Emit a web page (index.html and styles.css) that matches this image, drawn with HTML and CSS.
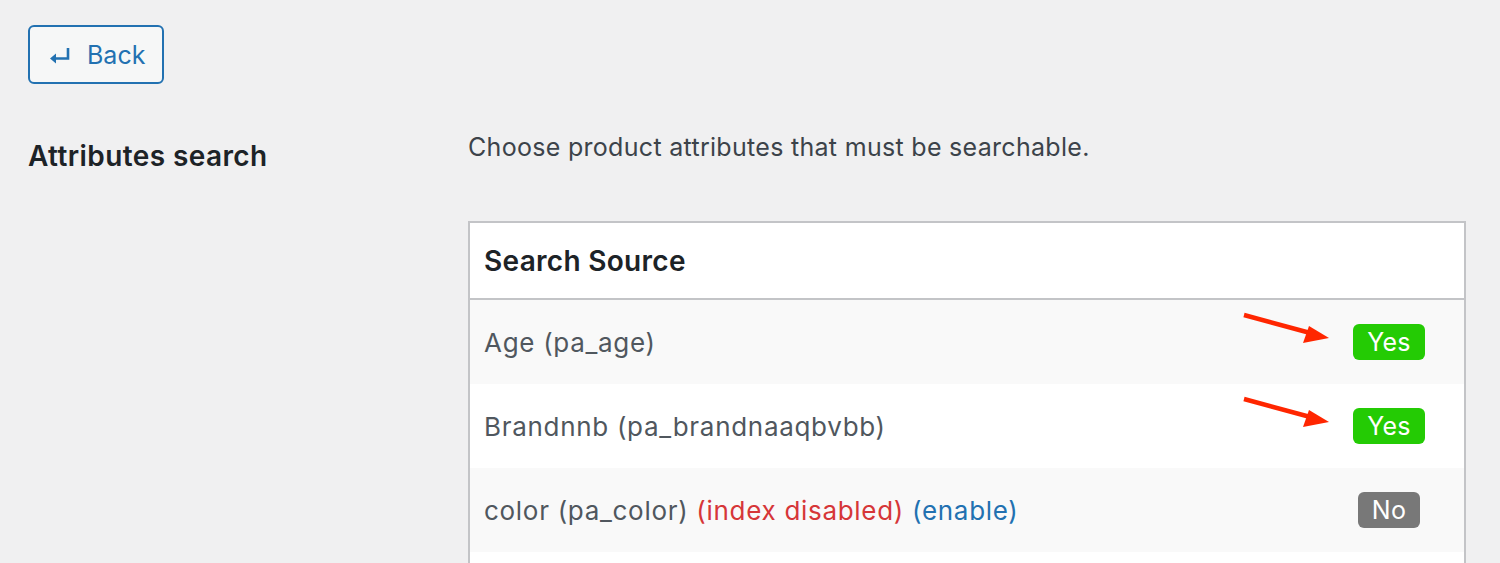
FILE: index.html
```html
<!DOCTYPE html>
<html lang="en">
<head>
  <meta charset="UTF-8" />
  <meta name="viewport" content="width=device-width, initial-scale=1.0"/>
  <title>Attributes search</title>
  <link rel="stylesheet" href="styles.css">
</head>
<body>
  <div class="wrap">
    <button class="back-btn">
      <svg class="back-icon" width="22" height="20" viewBox="0 0 22 20">
        <path d="M19 2 V12.5 H6" fill="none" stroke="#2271b1" stroke-width="2.6"/>
        <path d="M1 12.5 L7 7.5 V17.5 Z" fill="#2271b1"/>
      </svg>
      Back
    </button>

    <div class="setting">
      <div class="setting-label">Attributes search</div>
      <div class="setting-body">
        <p class="description">Choose product attributes that must be searchable.</p>

        <div class="sources">
          <div class="sources-head">Search Source</div>

          <div class="source-row striped">
            <div class="source-name">Age (pa_age)</div>
            <div class="source-state">
              <svg class="pointer" width="94" height="36" viewBox="0 0 94 36">
                <line x1="4" y1="5" x2="74" y2="24" stroke="#ff2600" stroke-width="4.5"/>
                <polygon points="89,28 69,16 63,33" fill="#ff2600"/>
              </svg>
              <span class="badge yes">Yes</span>
            </div>
          </div>

          <div class="source-row">
            <div class="source-name">Brandnnb (pa_brandnaaqbvbb)</div>
            <div class="source-state">
              <svg class="pointer" width="94" height="36" viewBox="0 0 94 36">
                <line x1="4" y1="5" x2="74" y2="24" stroke="#ff2600" stroke-width="4.5"/>
                <polygon points="89,28 69,16 63,33" fill="#ff2600"/>
              </svg>
              <span class="badge yes">Yes</span>
            </div>
          </div>

          <div class="source-row striped">
            <div class="source-name">color (pa_color) <span class="disabled">(index disabled)</span> <a class="enable" href="#">(enable)</a></div>
            <div class="source-state">
              <span class="badge no">No</span>
            </div>
          </div>

          <div class="source-row">
            <div class="source-name">&nbsp;</div>
            <div class="source-state"></div>
          </div>
        </div>
      </div>
    </div>
  </div>
</body>
</html>
```

FILE: styles.css
```css
* { margin: 0; padding: 0; box-sizing: border-box; }

body {
  font-family: Inter, "Noto Sans", sans-serif;
  background: #f0f0f1;
  color: #3c434a;
  overflow: hidden;
}

.wrap {
  padding: 25px 0 0 28px;
  width: 1466px;
}

.back-btn {
  display: flex;
  align-items: center;
  gap: 16px;
  height: 59px;
  padding: 0 17px 0 19px;
  border: 2px solid #2271b1;
  border-radius: 6px;
  background: #f6f7f7;
  color: #2271b1;
  font-family: inherit;
  font-size: 25px;
  cursor: pointer;
}

.back-icon { margin-top: 3px; }

.setting {
  display: flex;
  margin-top: 48px;
}

.setting-label {
  width: 440px;
  flex-shrink: 0;
  font-size: 28px;
  font-weight: 600;
  letter-spacing: 0.4px;
  color: #1d2327;
  padding-top: 7px;
}

.setting-body { flex: 1; }

.description {
  font-size: 25px;
  letter-spacing: 0.3px;
  color: #3c434a;
  line-height: 30px;
}

.sources {
  margin-top: 59px;
  border: 2px solid #c3c4c7;
  background: #fff;
}

.sources-head {
  height: 77px;
  display: flex;
  align-items: center;
  padding: 0 14px;
  font-size: 28px;
  font-weight: 600;
  letter-spacing: 0.3px;
  color: #1d2327;
  border-bottom: 2px solid #c3c4c7;
}

.source-row {
  display: grid;
  grid-template-columns: 1fr 150px;
  align-items: center;
  height: 84px;
  font-size: 26px;
  letter-spacing: 0.7px;
  color: #50575e;
}

.source-row.striped { background: #f9f9f9; }

.source-name { padding-left: 14px; }

.disabled { color: #d63638; }

.enable {
  color: #2271b1;
  text-decoration: none;
}

.source-state {
  position: relative;
  display: flex;
  justify-content: center;
}

.pointer {
  position: absolute;
  left: -74px;
  top: -14px;
}

.badge {
  display: inline-block;
  height: 36px;
  line-height: 36px;
  padding: 0 14px;
  border-radius: 6px;
  color: #fff;
  font-size: 25px;
  letter-spacing: 0.3px;
}

.badge.yes { background: #24cb04; }
.badge.no { background: #787878; }
```
